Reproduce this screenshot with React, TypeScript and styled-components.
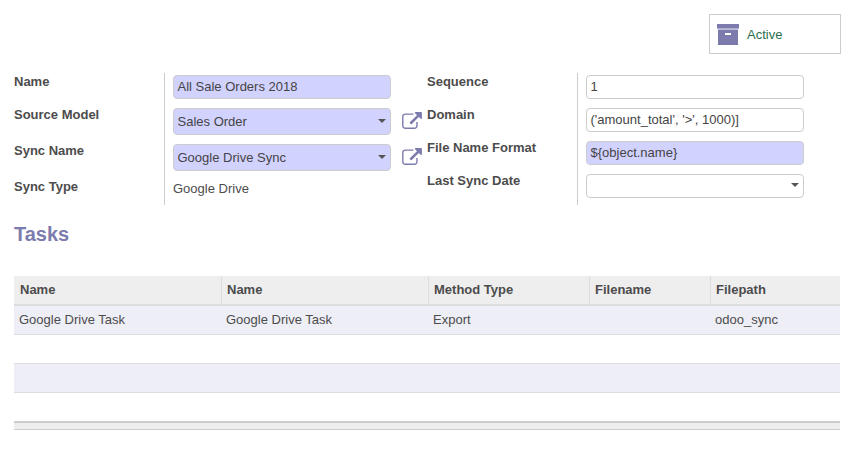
import React from "react";
import styled, { createGlobalStyle } from "styled-components";

const GlobalStyle = createGlobalStyle`
    html, body {
        margin: 0;
        padding: 0;
        background: #fff;
    }
    body {
        font-family: "Liberation Sans", Arial, sans-serif;
        font-size: 13px;
        color: #4c4c4c;
    }
`;

const Page = styled.div`
    width: 856px;
    height: 471px;
    padding: 14px 15px 0 14px;
    box-sizing: border-box;
    overflow: hidden;
`;

const ButtonBox = styled.div`
    display: flex;
    justify-content: flex-end;
    height: 40px;
    margin-bottom: 19px;
`;

const StatButton = styled.div`
    width: 132px;
    height: 40px;
    box-sizing: border-box;
    border: 1px solid #ccc;
    display: flex;
    align-items: center;
    gap: 8px;
    padding-left: 7px;
    color: #2a7050;
`;

const FormGrid = styled.div`
    display: flex;
`;

const Group = styled.div<{ $width: number }>`
    width: ${(p) => p.$width}px;
    display: grid;
    grid-template-columns: 150px 1fr;
`;

const Label = styled.div`
    font-weight: 700;
    line-height: 16px;
    padding-top: 1px;
`;

const Cell = styled.div<{ $height: number }>`
    height: ${(p) => p.$height}px;
    border-left: 1px solid #ccc;
    padding: 2px 0 0 8px;
    box-sizing: border-box;
    display: flex;
    align-items: flex-start;
`;

const Field = styled.div<{ $required?: boolean; $tall?: boolean }>`
    position: relative;
    width: 218px;
    height: ${(p) => (p.$tall ? 27 : 24)}px;
    line-height: ${(p) => (p.$tall ? 25 : 22)}px;
    box-sizing: border-box;
    padding-left: 3.5px;
    border: 1px solid #ccc;
    border-radius: 4px;
    background: ${(p) => (p.$required ? "#d2d2ff" : "#fff")};
    color: #444;
    white-space: nowrap;
`;

const Caret = styled.span`
    position: absolute;
    right: 4px;
    top: 50%;
    margin-top: -3px;
    border-left: 4px solid transparent;
    border-right: 4px solid transparent;
    border-top: 4px solid #555;
`;

const PlainValue = styled.div`
    line-height: 16px;
    margin-top: 1px;
`;

const ExternalLink = styled.svg`
    width: 20px;
    height: 17px;
    margin: 4px 0 0 11px;
    flex: none;
    color: #7c7bad;
`;

const SectionTitle = styled.h2`
    margin: 17px 0 30px;
    font-size: 20px;
    line-height: 24px;
    font-weight: 700;
    color: #7c7bad;
`;

const Table = styled.table`
    width: 826px;
    table-layout: fixed;
    border-collapse: separate;
    border-spacing: 0;
`;

const HeadCell = styled.th`
    height: 30px;
    box-sizing: border-box;
    padding: 0 0 2px 5px;
    background: #eee;
    border-bottom: 2px solid #ddd;
    border-left: 1px solid #ddd;
    text-align: left;
    font-weight: 700;
    color: #4c4c4c;
    &:first-child {
        border-left: 0;
        padding-left: 6px;
    }
`;

const Row = styled.tr<{ $odd?: boolean }>`
    background: ${(p) => (p.$odd ? "#eeeef6" : "#fff")};
`;

const DataCell = styled.td`
    height: 29px;
    box-sizing: border-box;
    padding: 0 0 1px 5px;
    border-bottom: 1px solid #ddd;
`;

const LastCell = styled.td`
    height: 28px;
    box-sizing: border-box;
    padding: 0;
`;

const FootCell = styled.td`
    height: 9px;
    box-sizing: border-box;
    padding: 0;
    background: #eee;
    border-top: 2px solid #ccc;
    border-bottom: 1px solid #ccc;
`;

const columns = [207, 207, 161, 121, 130];
const headers = ["Name", "Name", "Method Type", "Filename", "Filepath"];
const task = ["Google Drive Task", "Google Drive Task", "Export", "", "odoo_sync"];

const ArchiveIcon = () => (
    <svg width="22" height="21" viewBox="0 0 22 21" fill="#7c7bad">
        <rect x="0" y="0" width="22" height="4.6" />
        <path d="M1 5.400h20V21H1zM8 9v2h6V9z" fillRule="evenodd" />
    </svg>
);

const LinkIcon = () => (
    <ExternalLink viewBox="0 0 1792 1536" fill="currentColor">
        <path d="M1408 928v320q0 119-84.500 203.500t-203.500 84.500h-832q-119 0-203.500-84.500t-84.500-203.500v-832q0-119 84.500-203.500t203.500-84.500h704q14 0 23 9t9 23v64q0 14-9 23t-23 9h-704q-66 0-113 47t-47 113v832q0 66 47 113t113 47h832q66 0 113-47t47-113v-320q0-14 9-23t23-9h64q14 0 23 9t9 23zm384-864v512q0 26-19 45t-45 19-45-19l-176-176-652 652q-10 10-23 10t-23-10l-114-114q-10-10-10-23t10-23l652-652-176-176q-19-19-19-45t19-45 45-19h512q26 0 45 19t19 45z" />
    </ExternalLink>
);

const App: React.FC = () => (
    <Page>
        <GlobalStyle />
        <ButtonBox>
            <StatButton>
                <ArchiveIcon />
                Active
            </StatButton>
        </ButtonBox>
        <FormGrid>
            <Group $width={413}>
                <Label>Name</Label>
                <Cell $height={33}>
                    <Field $required>All Sale Orders 2018</Field>
                </Cell>
                <Label>Source Model</Label>
                <Cell $height={36}>
                    <Field $required $tall>
                        Sales Order
                        <Caret />
                    </Field>
                    <LinkIcon />
                </Cell>
                <Label>Sync Name</Label>
                <Cell $height={36}>
                    <Field $required $tall>
                        Google Drive Sync
                        <Caret />
                    </Field>
                    <LinkIcon />
                </Cell>
                <Label>Sync Type</Label>
                <Cell $height={27}>
                    <PlainValue>Google Drive</PlainValue>
                </Cell>
            </Group>
            <Group $width={400}>
                <Label>Sequence</Label>
                <Cell $height={33}>
                    <Field>1</Field>
                </Cell>
                <Label>Domain</Label>
                <Cell $height={33}>
                    <Field>('amount_total', '&gt;', 1000)]</Field>
                </Cell>
                <Label>File Name Format</Label>
                <Cell $height={33}>
                    <Field $required>{"${object.name}"}</Field>
                </Cell>
                <Label>Last Sync Date</Label>
                <Cell $height={33}>
                    <Field>
                        <Caret />
                    </Field>
                </Cell>
            </Group>
        </FormGrid>
        <SectionTitle>Tasks</SectionTitle>
        <Table>
            <colgroup>
                {columns.map((width, i) => (
                    <col key={i} style={{ width }} />
                ))}
            </colgroup>
            <thead>
                <tr>
                    {headers.map((header, i) => (
                        <HeadCell key={i}>{header}</HeadCell>
                    ))}
                </tr>
            </thead>
            <tbody>
                <Row $odd>
                    {task.map((value, i) => (
                        <DataCell key={i}>{value}</DataCell>
                    ))}
                </Row>
                <Row>
                    <DataCell colSpan={5} />
                </Row>
                <Row $odd>
                    <DataCell colSpan={5} />
                </Row>
                <Row>
                    <LastCell colSpan={5} />
                </Row>
            </tbody>
            <tfoot>
                <tr>
                    <FootCell colSpan={5} />
                </tr>
            </tfoot>
        </Table>
    </Page>
);

export default App;
